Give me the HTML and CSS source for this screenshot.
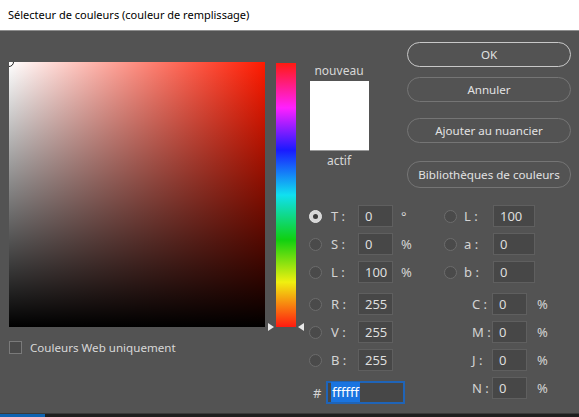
FILE: index.html
```html
<!DOCTYPE html>
<html lang="fr">
<head>
    <meta charset="UTF-8">
    <meta name="viewport" content="width=device-width, initial-scale=1.0">
    <title>Sélecteur de couleurs</title>
    <link rel="stylesheet" href="styles.css">
</head>
<body>
    <div class="window">
        <div class="titlebar">Sélecteur de couleurs (couleur de remplissage)</div>

        <div class="dialog">
            <div class="picker">
                <div class="field"><span class="marker"></span></div>
                <label class="web-only"><span class="checkbox"></span>Couleurs Web uniquement</label>
            </div>

            <div class="hue-wrap">
                <div class="hue"></div>
                <span class="arrow arrow-left"></span>
                <span class="arrow arrow-right"></span>
            </div>

            <div class="panel">
                <div class="panel-top">
                    <div class="preview">
                        <div class="preview-label">nouveau</div>
                        <div class="swatch">
                            <div class="swatch-new"></div>
                            <div class="swatch-current"></div>
                        </div>
                        <div class="preview-label">actif</div>
                    </div>
                    <div class="buttons">
                        <button class="btn btn-default">OK</button>
                        <button class="btn">Annuler</button>
                        <button class="btn btn-gap">Ajouter au nuancier</button>
                        <button class="btn btn-gap btn-last">Bibliothèques de couleurs</button>
                    </div>
                </div>

                <div class="values">
                    <div class="col col-left">
                        <div class="row"><span class="radio checked"></span><span class="lbl">T :</span><span class="input">0</span><span class="unit">°</span></div>
                        <div class="row"><span class="radio"></span><span class="lbl">S :</span><span class="input">0</span><span class="unit">%</span></div>
                        <div class="row"><span class="radio"></span><span class="lbl">L :</span><span class="input">100</span><span class="unit">%</span></div>
                        <div class="row sep"><span class="radio"></span><span class="lbl">R :</span><span class="input">255</span></div>
                        <div class="row"><span class="radio"></span><span class="lbl">V :</span><span class="input">255</span></div>
                        <div class="row"><span class="radio"></span><span class="lbl">B :</span><span class="input">255</span></div>
                        <div class="row sep hex-row"><span class="hash">#</span><span class="input hex"><span class="selected">ffffff</span></span></div>
                    </div>
                    <div class="col col-right">
                        <div class="row"><span class="radio"></span><span class="lbl">L :</span><span class="input wide">100</span></div>
                        <div class="row"><span class="radio"></span><span class="lbl">a :</span><span class="input wide">0</span></div>
                        <div class="row"><span class="radio"></span><span class="lbl">b :</span><span class="input wide">0</span></div>
                        <div class="row sep cmyk"><span class="lbl">C :</span><span class="input">0</span><span class="unit">%</span></div>
                        <div class="row cmyk"><span class="lbl">M :</span><span class="input">0</span><span class="unit">%</span></div>
                        <div class="row cmyk"><span class="lbl">J :</span><span class="input">0</span><span class="unit">%</span></div>
                        <div class="row cmyk"><span class="lbl">N :</span><span class="input">0</span><span class="unit">%</span></div>
                    </div>
                </div>
            </div>
        </div>

        <div class="taskbar"><span class="taskbar-active"></span></div>
    </div>
</body>
</html>
```

FILE: styles.css
```css
body {
    font-family: "Noto Sans", "Open Sans", sans-serif;
    margin: 0;
    padding: 0;
    background-color: #535353;
}
.window {
    display: flex;
    flex-direction: column;
    height: 100vh;
    overflow: hidden;
}
.titlebar {
    height: 30px;
    line-height: 29px;
    padding-left: 8px;
    background-color: #ffffff;
    border-bottom: 1px solid #8e8e8e;
    font-size: 11px;
    color: #000;
}
.dialog {
    flex: 1;
    display: flex;
    padding-left: 9px;
}
.picker {
    width: 256px;
    padding-top: 31px;
}
.field {
    position: relative;
    width: 256px;
    height: 265px;
    overflow: hidden;
    background:
        linear-gradient(to bottom, rgba(0, 0, 0, 0), #000),
        linear-gradient(to right, #fff, #ff1a00);
}
.marker {
    position: absolute;
    top: -5px;
    left: -5px;
    width: 8px;
    height: 8px;
    border: 1.5px solid #222;
    border-radius: 50%;
}
.web-only {
    display: flex;
    align-items: center;
    margin-top: 13px;
    font-size: 11.6px;
    color: #d8d8d8;
}
.checkbox {
    width: 11px;
    height: 11px;
    border: 1px solid #7a7a7a;
    background-color: #4a4a4a;
    margin-right: 8px;
}
.hue-wrap {
    position: relative;
    width: 20px;
    height: 264px;
    margin: 32px 0 0 11px;
}
.hue {
    height: 100%;
    background: linear-gradient(to bottom, #ff1a10 0%, #ff20ff 17%, #1a1aff 33%, #10e0f0 50%, #10d010 67%, #f0f010 83%, #ff1a10 100%);
}
.arrow {
    position: absolute;
    bottom: -4px;
    width: 0;
    height: 0;
    border-top: 4px solid transparent;
    border-bottom: 4px solid transparent;
}
.arrow-left {
    left: -8px;
    border-left: 6px solid #e8e8e8;
}
.arrow-right {
    right: -8px;
    border-right: 6px solid #e8e8e8;
}
.panel {
    margin-left: 12px;
    flex: 1;
}
.panel-top {
    display: flex;
    height: 174px;
}
.preview {
    width: 60px;
    display: flex;
    flex-direction: column;
    align-items: center;
    margin-left: 1px;
}
.preview-label {
    font-size: 12px;
    color: #d8d8d8;
    line-height: 16px;
}
.preview-label:first-child {
    margin-top: 32px;
}
.swatch {
    width: 59px;
    height: 69px;
    margin: 2px 0 2px;
    border-bottom: 1px solid #999;
}
.swatch-new, .swatch-current {
    height: 50%;
    background-color: #ffffff;
}
.buttons {
    display: flex;
    flex-direction: column;
    margin: 11px 0 0 38px;
    width: 164px;
}
.btn {
    height: 25px;
    margin-bottom: 10px;
    border: 1px solid #757575;
    border-radius: 13px;
    background: none;
    color: #e2e2e2;
    font-family: inherit;
    font-size: 11.6px;
    padding: 0;
}
.btn-default {
    border: 1.5px solid #c8c8c8;
}
.btn-gap {
    margin-top: 6px;
    margin-bottom: 9px;
}
.btn-last {
    margin-top: 9px;
    height: 27px;
}
.values {
    display: flex;
}
.col {
    display: flex;
    flex-direction: column;
    gap: 6px;
}
.col-left {
    width: 135px;
    margin-left: 1px;
}
.row {
    display: flex;
    align-items: center;
    height: 22px;
    font-size: 13px;
    color: #d4d4d4;
}
.row.sep {
    margin-top: 4px;
}
.radio {
    width: 11px;
    height: 11px;
    border-radius: 50%;
    background-color: #4a4a4a;
    border: 1px solid #6c6c6c;
    margin-right: 9px;
    position: relative;
}
.radio.checked {
    background-color: #d6d6d6;
    border-color: #e4e4e4;
}
.radio.checked::after {
    content: "";
    position: absolute;
    top: 3px;
    left: 3px;
    width: 5px;
    height: 5px;
    border-radius: 50%;
    background-color: #3a3a3a;
}
.lbl {
    width: 27px;
}
.input {
    box-sizing: border-box;
    width: 35px;
    height: 22px;
    line-height: 20px;
    padding-left: 6px;
    background-color: #474747;
    border: 1px solid #5f5f5f;
    color: #dedede;
}
.input.wide {
    width: 42px;
}
.unit {
    margin-left: 8px;
}
.hex-row {
    height: 23px;
}
.hash {
    margin-left: 4px;
    width: 13px;
}
.input.hex {
    width: 79px;
    height: 23px;
    padding-left: 3px;
    border: 2px solid #1f64b8;
    line-height: 19px;
}
.selected {
    background-color: #1a74e0;
    color: #ffffff;
    padding: 1px 1px;
}
.col-right .radio {
    margin-right: 7px;
}
.col-right .lbl {
    width: 29px;
}
.cmyk {
    padding-left: 28px;
}
.cmyk .lbl {
    width: 20px;
}
.cmyk .unit {
    margin-left: 10px;
}
.taskbar {
    height: 3px;
    border-top: 1px solid #3a3a3a;
    background-color: #1e1e1e;
}
.taskbar-active {
    display: block;
    width: 45px;
    height: 3px;
    background-color: #1063b0;
}
```
